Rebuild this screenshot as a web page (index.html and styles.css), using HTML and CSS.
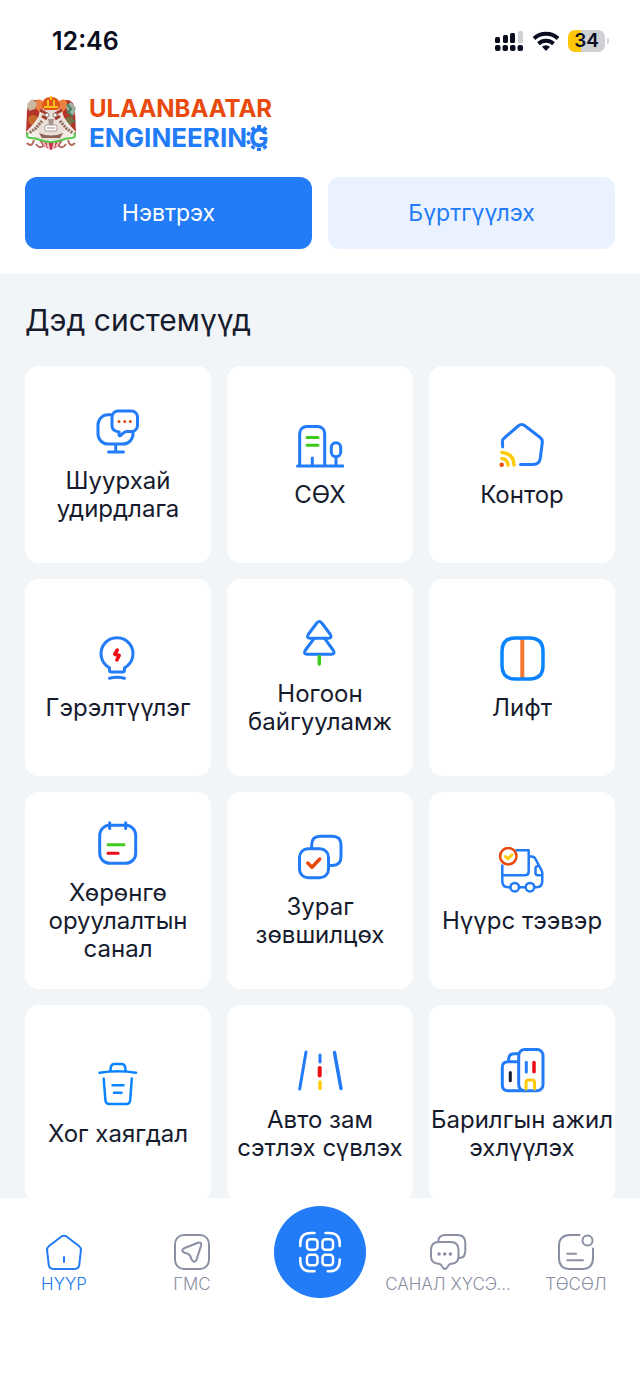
FILE: index.html
```html
<!DOCTYPE html>
<html lang="mn">
<head>
    <meta charset="UTF-8">
    <meta name="viewport" content="width=device-width, initial-scale=1.0">
    <title>Ulaanbaatar Engineering</title>
    <link rel="stylesheet" href="styles.css">
</head>
<body>
    <div class="app">
        <div class="status-bar">
            <span class="time">12:46</span>
            <div class="status-icons">
                <svg class="signal" viewBox="0 0 28 20">
                    <g fill="#090d20">
                        <rect x="0" y="6" width="5" height="6" rx="1.5"/>
                        <rect x="8" y="4" width="5" height="8" rx="1.5"/>
                        <rect x="15" y="2" width="5" height="10" rx="1.5"/>
                        <rect x="0" y="14" width="5.500" height="6" rx="2"/>
                        <rect x="7.500" y="14" width="5.500" height="6" rx="2"/>
                        <rect x="15" y="14" width="5.500" height="6" rx="2"/>
                        <rect x="22.500" y="14" width="5.500" height="6" rx="2"/>
                    </g>
                    <rect x="23" y="0" width="5" height="12" rx="1.5" fill="#cfd0d4"/>
                </svg>
                <svg class="wifi" viewBox="0 0 28 20">
                    <g fill="none" stroke="#090d20" stroke-width="4">
                        <path d="M2 7.500a17.500 17.500 0 0 1 24 0"/>
                        <path d="M6.500 12.800a11 11 0 0 1 15 0"/>
                    </g>
                    <path d="M14 20l-4-4.200a6 6 0 0 1 8 0z" fill="#090d20"/>
                </svg>
                <div class="battery"><span>34</span></div>
            </div>
        </div>

        <header class="header">
            <div class="brand">
                <svg class="emblem" viewBox="0 0 52 54">
                    <path d="M2 15Q3 3 11 4l7 7-5 22-12 5z" fill="#b5342a"/>
                    <path d="M50 15Q49 3 41 4l-7 7 5 22 12 5z" fill="#b5342a"/>
                    <path d="M11 4q7-2 8 5l-4 8-6-7zM41 4q-7-2-8 5l4 8 6-7z" fill="#ea8041"/>
                    <path d="M2 8l5-5 5 4-2 6-6 2z" fill="#c9b89e"/>
                    <path d="M41 10l5-4 5 6-2 7-6-1z" fill="#9fb0a6"/>
                    <path d="M42 8l4 5-3 3 5 5M40 26l5-4 5 4" fill="none" stroke="#3f7f54" stroke-width="2"/>
                    <circle cx="8" cy="24" r="5" fill="#c76a2b"/>
                    <circle cx="44" cy="25" r="4" fill="#7b7444"/>
                    <path d="M1 36l9-10 5-8h22l5 8 9 10-12 8H13z" fill="#f3ece6"/>
                    <path d="M15 14h22l4 18-5 12H16l-5-12z" fill="#e9dfd8"/>
                    <path d="M17 10Q17 1 26 1t9 9l-2 4H19z" fill="#e25716"/>
                    <path d="M19 11h14M23 4v6m6-6v6M26 0v4" stroke="#f7c21c" stroke-width="2"/>
                    <path d="M15 14l7 4m15-4l-7 4M17 20l5 3m13-3l-5 3" stroke="#a43c2d" stroke-width="3"/>
                    <circle cx="22" cy="19" r="2" fill="#fff" stroke="#8a7069"/>
                    <circle cx="30" cy="19" r="2" fill="#fff" stroke="#8a7069"/>
                    <path d="M23 23h6l-1 6h-4z" fill="#a59791"/>
                    <path d="M17 25l-7 8-6 4M35 25l7 8 6 4" fill="none" stroke="#8d6958" stroke-width="3" stroke-dasharray="2 1"/>
                    <rect x="20" y="29" width="12" height="6" rx="1" fill="#fff" stroke="#b39d92"/>
                    <path d="M22 32h8" stroke="#9a8e88"/>
                    <path d="M14 37q12 5 24 0l-3 5H17z" fill="#8d6355"/>
                    <path d="M14 44q12 5 24 0l-4 6-8 4-8-4z" fill="#c3344c"/>
                    <path d="M17 44l4 7m1-7l2 9m6-9l-2 9m7-9l-4 7" stroke="#f1c8c5" stroke-width="2"/>
                    <path d="M3 37q-3 5 3 5 4 0 9 2 11 4 22 0 5-2 9-2 6 0 3-5" fill="none" stroke="#51c947" stroke-width="2"/>
                    <path d="M2 47q5 5 7-3M50 47q-5 5-7-3M11 48q4 6 8 1M41 48q-4 6-8 1" fill="none" stroke="#b46a5e" stroke-width="2"/>
                </svg>
                <h1 class="brand-name">
                    <span class="brand-top">ULAANBAATAR</span>
                    <span class="brand-bottom">ENGINEERIN<span class="gear">G<svg viewBox="0 0 26 26"><path d="M13 0v3.500M13 22.500V26M1 8l3 1.500M1 18l3-1.500M6 2.500l2 2.500M20 2.500L18 5M6 23.500L8 21M20 23.500L18 21"/></svg></span></span>
                </h1>
            </div>
            <div class="auth-buttons">
                <button class="button login-button">Нэвтрэх</button>
                <button class="button register-button">Бүртгүүлэх</button>
            </div>
        </header>

        <main class="content">
            <h2>Дэд системүүд</h2>
            <div class="grid">
                <a class="card" href="#">
                    <svg class="icon" viewBox="0 0 48 48">
                        <path d="M17 7.800h-3a10 10 0 0 0-10 10V27a10 10 0 0 0 10 10h15a10 10 0 0 0 10-10v-2.500M21.700 37v8M14.500 45h15"/>
                        <path d="M24 4h13.500a6 6 0 0 1 6 6v8.500a6 6 0 0 1-6 6h-5c-2 0-4.500 3-6 4-1 .7-1.600 0-1.500-1l.2-2.600c-4-.4-7.200-2-7.200-6.400V10a6 6 0 0 1 6-6z"/>
                        <path class="orange" d="M25 14.500h.01M30.700 14.500h.01M36.300 14.500h.01"/>
                    </svg>
                    <span>Шуурхай удирдлага</span>
                </a>
                <a class="card" href="#">
                    <svg class="icon" viewBox="0 0 48 48">
                        <path d="M3.700 45V12.500a7 7 0 0 1 7-7h11a7 7 0 0 1 7 7V45M1.500 45h45.500M16.300 37v8M40 36v9"/>
                        <rect x="35.300" y="21.800" width="9.400" height="14" rx="4.700"/>
                        <path class="green" d="M11 16.500h11M11 24.200h11"/>
                    </svg>
                    <span>СӨХ</span>
                </a>
                <a class="card" href="#">
                    <svg class="icon" viewBox="0 0 48 48">
                        <path d="M4.700 26l-.3-5q-.2-2.500 1.900-4L20.200 5q3.500-3 7 0l15 11.500q2.500 2 2.100 5l-2 15.500q-.8 6.500-7.300 6.500H22.500"/>
                        <path class="yellow" d="M4 31.500q11.500 1 12 12.500M4 37.500q5.500.6 6 6.500" stroke-width="3.500"/>
                        <circle cx="3.700" cy="43.800" r="2.200" fill="#e84a0e" stroke="none"/>
                    </svg>
                    <span>Контор</span>
                </a>
                <a class="card" href="#">
                    <svg class="icon" viewBox="0 0 48 48">
                        <path d="M15.500 33.800a16 16 0 1 1 15 0V36q0 2-2 2h-11q-2 0-2-2zM15.500 44.300q7.500-2 15 0"/>
                        <path class="red" d="M23.300 16l-2.500 4.200 4.400 1.300-2.300 4.500" stroke-width="3.500"/>
                    </svg>
                    <span>Гэрэлтүүлэг</span>
                </a>
                <a class="card" href="#">
                    <svg class="icon" viewBox="0 0 48 48">
                        <path d="M20.800 3q2.500-3 5 0l8.600 11.500q2 3.500-2 3.700H14.200q-4-.2-2-3.700z"/>
                        <path d="M18 18.700L9.200 30.500q-2 3.500 2 3.700h24.200q4-.2 2-3.700L28.800 18.700"/>
                        <path class="green" d="M23.300 36.500v7.500" stroke-width="3.500"/>
                    </svg>
                    <span>Ногоон байгууламж</span>
                </a>
                <a class="card" href="#">
                    <svg class="icon sky" viewBox="0 0 48 48">
                        <path d="M24.300 5v39" stroke="#f27830" stroke-width="4" stroke-linecap="butt"/>
                        <path d="M17.500 4h14Q45 4 45 17.500v14Q45 45 31.500 45h-14Q4 45 4 31.500v-14Q4 4 17.500 4z" stroke-width="3.500"/>
                    </svg>
                    <span>Лифт</span>
                </a>
                <a class="card" href="#">
                    <svg class="icon" viewBox="0 0 48 48">
                        <rect x="5.700" y="6.300" width="36" height="38" rx="10"/>
                        <path d="M15.700 3.800V9.500M31.700 3.800V9.500"/>
                        <path class="green" d="M14 25.800h16"/>
                        <path class="red" d="M14 34.200h10"/>
                    </svg>
                    <span>Хөрөнгө оруулалтын санал</span>
                </a>
                <a class="card" href="#">
                    <svg class="icon" viewBox="0 0 48 48">
                        <rect x="3.500" y="15.800" width="29" height="29" rx="8.500"/>
                        <path d="M15.700 15.500v-3.700q0-8.600 8.600-8.600h12q8.700 0 8.700 8.600v12q0 8.700-8.700 8.700h-3"/>
                        <path class="orange" d="M11.800 30l4.200 4.200 7.800-8.200" stroke-width="3.500"/>
                    </svg>
                    <span>Зураг зөвшилцөх</span>
                </a>
                <a class="card" href="#">
                    <svg class="icon thin" viewBox="0 0 48 48">
                        <path d="M18.500 3.200h12.200v21.400q0 3.600-3.600 3.600H4.300M4.300 18.500v15.700q0 6 6 6h2M21 40.200h6.700M36.300 40.200h2q6 0 6-6V26q0-1.500-1-3.200L37.500 12q-1.300-2.500-4-2.500h-2.800M44 28.200h-4.300q-2.200 0-2.200-2.200v-4.500q0-2.500 3-2.800"/>
                        <circle cx="16.700" cy="40.200" r="4.300"/>
                        <circle cx="32" cy="40.200" r="4.300"/>
                        <circle class="orange" cx="10.300" cy="9.200" r="8.200"/>
                        <path class="yellow" d="M7.500 9.500l2.500 2.300 4-4" stroke-width="3"/>
                    </svg>
                    <span>Нүүрс тээвэр</span>
                </a>
                <a class="card" href="#">
                    <svg class="icon sky thin" viewBox="0 0 48 48">
                        <path d="M5.500 12.700q18.300-3 36.500 0M16.300 11l.6-4q.5-3 3.500-3h7.200q3 0 3.500 3l.6 4M9.700 18.500l1.700 21.700q.3 3.800 4 3.800h16.800q3.700 0 4-3.800l1.600-21.700M18.500 25.200h11M20 32.800h7.500"/>
                    </svg>
                    <span>Хог хаягдал</span>
                </a>
                <a class="card" href="#">
                    <svg class="icon" viewBox="0 0 48 48">
                        <path d="M10 6L3.700 43M24 9v7"/>
                        <path d="M38.500 6.500L45 42.500" stroke-width="3.500"/>
                        <path class="red" d="M23.700 22v7.500" stroke-width="4"/>
                        <path class="yellow" d="M24 36v6.500" stroke-width="3.500"/>
                    </svg>
                    <span>Авто зам сэтлэх сүвлэх</span>
                </a>
                <a class="card" href="#">
                    <svg class="icon" viewBox="0 0 48 48">
                        <rect x="20.700" y="3.500" width="24.300" height="41.300" rx="6"/>
                        <path d="M20.700 15.800H10q-5.700 0-5.700 5.700v17.600q0 5.700 5.700 5.700h17M10.700 15.500v-2q0-5.700 5.700-5.700h4.300M28.300 16.300v9.700"/>
                        <path d="M12.300 26.500v8.200" stroke="#161b2e"/>
                        <path class="red" d="M36 16.500v9.300" stroke-width="3.500"/>
                        <path class="yellow" d="M28 43v-6.500q0-2.500 2.500-2.500H34q2.500 0 2.500 2.500V43"/>
                    </svg>
                    <span>Барилгын ажил эхлүүлэх</span>
                </a>
            </div>
        </main>

        <nav class="tab-bar">
            <a class="tab active" href="#">
                <svg class="tab-icon" viewBox="0 0 36 36">
                    <path d="M15.500 2.500q2.500-1.600 5 0L33 12q2.200 1.700 1.900 4.500l-1.600 14.200Q32.800 35 28.500 35h-21q-4.300 0-4.800-4.300L1.100 16.500Q.8 13.700 3 12zM18 23v5"/>
                </svg>
                <span>НҮҮР</span>
            </a>
            <a class="tab" href="#">
                <svg class="tab-icon" viewBox="0 0 36 36">
                    <rect x="1" y="1" width="34" height="34" rx="9"/>
                    <path d="M10 14.300l14-5.600q4-1.200 3 3l-4.500 14q-1.800 4-4.600.3l-1.700-4q-.8-1.500-2.300-2.200l-4-1.300q-3.300-2 .1-4.200z"/>
                </svg>
                <span>ГМС</span>
            </a>
            <div class="tab">
                <button class="scan-button" aria-label="QR">
                    <svg viewBox="0 0 48 48">
                        <path d="M4.300 18v-2.500Q4.300 5 14.800 5h3.700M29.500 5h3.700q10.500 0 10.500 10.500V18M4.300 30v2.800q0 10.500 10.500 10.500h3.700M43.700 31.500v1.300q0 10.500-10.500 10.500h-1.500"/>
                        <rect x="11" y="11.300" width="10.500" height="10.500" rx="3"/>
                        <rect x="26.500" y="11.300" width="10.500" height="10.500" rx="3"/>
                        <rect x="11" y="26.700" width="10.500" height="10.500" rx="3"/>
                        <rect x="26.500" y="26.700" width="10.500" height="10.500" rx="3"/>
                    </svg>
                </button>
            </div>
            <a class="tab" href="#">
                <svg class="tab-icon" viewBox="0 0 36 36">
                    <path d="M8.300 7Q8.800 1 15.300 1h12q8 0 8 8v8q0 6.500-5.500 7"/>
                    <path d="M9 8h11.500q8 0 8 8v6.300q0 7-7 7.500-2 .1-3 1.700l-1.800 2.500q-1.800 1.800-3.500 0l-1.700-2.500q-1-1.600-3-1.700Q1 29.300 1 22.300V16q0-8 8-8z"/>
                    <path d="M9 20h.01M14.700 20h.01M20.400 20h.01" stroke-width="3.500"/>
                </svg>
                <span>САНАЛ ХҮСЭ...</span>
            </a>
            <a class="tab" href="#">
                <svg class="tab-icon" viewBox="0 0 36 36">
                    <path d="M21.500 1H12Q1 1 1 12v12q0 11 11 11h12q11 0 11-11v-9.500M9.300 19.700H18M9.300 26.300H25"/>
                    <circle cx="29.500" cy="6.500" r="5"/>
                </svg>
                <span>ТӨСӨЛ</span>
            </a>
        </nav>
    </div>
</body>
</html>
```
FILE: styles.css
```css
* {
    box-sizing: border-box;
}

body {
    margin: 0;
    font-family: Inter, "Noto Sans", sans-serif;
    color: #161b2e;
    background: #fff;
}

a {
    color: inherit;
    text-decoration: none;
}

.app {
    display: flex;
    flex-direction: column;
    height: 100vh;
}

/* Status bar */
.status-bar {
    display: flex;
    justify-content: space-between;
    align-items: center;
    padding: 24px 32px 0 52px;
}

.time {
    font-size: 25px;
    line-height: 34px;
    font-weight: 600;
    color: #090d20;
}

.status-icons {
    display: flex;
    align-items: center;
    gap: 9px;
}

.signal,
.wifi {
    width: 28px;
    height: 20px;
}

.battery {
    position: relative;
    width: 37px;
    height: 22px;
    margin: 0 3px 0 -1px;
    border-radius: 7px;
    background: linear-gradient(to right, #ffc60a 13px, #cfd0d4 13px);
    font-size: 19px;
    line-height: 22px;
    font-weight: 600;
    text-align: center;
    color: #090d20;
}

.battery::after {
    content: "";
    position: absolute;
    right: -4px;
    top: 8px;
    width: 2px;
    height: 6px;
    border-radius: 0 2px 2px 0;
    background: #cfd0d4;
}

/* Header */
.header {
    padding: 35px 25px 25px;
}

.brand {
    display: flex;
    align-items: center;
    gap: 12px;
    height: 60px;
}

.emblem {
    width: 52px;
    height: 54px;
}

.brand-name {
    display: flex;
    flex-direction: column;
    margin: 0;
    line-height: 29px;
    font-weight: 700;
}

.brand-top {
    font-size: 24px;
    color: #e84a0e;
}

.brand-bottom {
    font-size: 26px;
    color: #227bf7;
}

.gear {
    position: relative;
    display: inline-block;
    margin-left: 2px;
}

/* teeth around the last letter */
.gear svg {
    position: absolute;
    left: -3px;
    top: 2px;
    width: 26px;
    height: 26px;
    fill: none;
    stroke: #227bf7;
    stroke-width: 4;
}

.auth-buttons {
    display: flex;
    gap: 16px;
    margin-top: 24px;
}

.button {
    flex: 1;
    height: 72px;
    border: none;
    border-radius: 12px;
    font-family: inherit;
    font-size: 23px;
    cursor: pointer;
}

.login-button {
    background: #227bf7;
    color: #fff;
}

.register-button {
    background: #eaf2ff;
    color: #227bf7;
}

/* Services */
.content {
    flex: 1;
    min-height: 0;
    padding: 28px 25px;
    overflow-y: auto;
    scrollbar-width: none;
    background: #f2f5f8;
}

.content h2 {
    margin: 0 0 28px;
    font-size: 30px;
    line-height: 36px;
    font-weight: 400;
}

.grid {
    display: grid;
    grid-template-columns: repeat(3, minmax(0, 1fr));
    gap: 16px;
}

.card {
    display: flex;
    flex-direction: column;
    align-items: center;
    justify-content: center;
    gap: 12px;
    min-height: 197px;
    border-radius: 14px;
    background: #fff;
    font-size: 24px;
    line-height: 28px;
    text-align: center;
}

.icon,
.tab-icon,
.scan-button svg {
    fill: none;
    stroke: #227bf7;
    stroke-width: 3;
    stroke-linecap: round;
    stroke-linejoin: round;
}

.icon {
    width: 48px;
    height: 48px;
}

.icon.thin {
    stroke-width: 2.5;
}

.sky {
    stroke: #0a84ff;
}

.orange {
    stroke: #e84a0e;
}

.green {
    stroke: #3ccb1c;
}

.yellow {
    stroke: #ffca0a;
}

.red {
    stroke: #ec0c14;
}

/* Bottom tabs */
.tab-bar {
    display: grid;
    grid-template-columns: repeat(5, minmax(0, 1fr));
    height: 187px;
    padding-top: 8px;
    background: #fff;
}

.tab {
    display: flex;
    flex-direction: column;
    align-items: center;
    gap: 4px;
    padding-top: 28px;
    font-size: 17px;
    line-height: 20px;
    font-weight: 300;
    white-space: nowrap;
    color: #8a8fa3;
}

div.tab {
    padding-top: 0;
}

.tab.active {
    color: #227bf7;
}

.tab-icon {
    width: 36px;
    height: 36px;
    overflow: visible;
    stroke: #8a8fa3;
    stroke-width: 2;
}

.active .tab-icon {
    stroke: #227bf7;
}

.scan-button {
    display: flex;
    align-items: center;
    justify-content: center;
    width: 92px;
    height: 92px;
    padding: 0;
    border: none;
    border-radius: 50%;
    background: #227bf7;
    cursor: pointer;
}

.scan-button svg {
    width: 48px;
    height: 48px;
    stroke: #fff;
    stroke-width: 2.5;
}
```
